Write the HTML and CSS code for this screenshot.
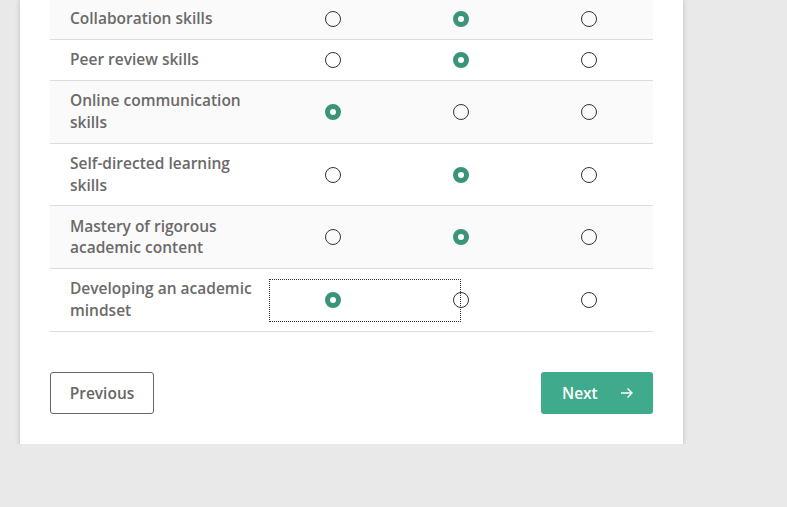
FILE: index.html
```html
<!DOCTYPE html>
<html>
<head>
<meta charset="utf-8">
<link rel="stylesheet" href="styles.css">
</head>
<body>
<div class="card">
  <table class="grid">
    <tr class="odd"><td class="label">Collaboration skills</td><td><span class="radio"></span></td><td><span class="radio on"></span></td><td><span class="radio"></span></td></tr>
    <tr><td class="label">Peer review skills</td><td><span class="radio"></span></td><td><span class="radio on"></span></td><td><span class="radio"></span></td></tr>
    <tr class="odd"><td class="label">Online communication skills</td><td><span class="radio on"></span></td><td><span class="radio"></span></td><td><span class="radio"></span></td></tr>
    <tr><td class="label">Self-directed learning skills</td><td><span class="radio"></span></td><td><span class="radio on"></span></td><td><span class="radio"></span></td></tr>
    <tr class="odd"><td class="label">Mastery of rigorous academic content</td><td><span class="radio"></span></td><td><span class="radio on"></span></td><td><span class="radio"></span></td></tr>
    <tr><td class="label">Developing an academic mindset</td><td class="focus-cell"><span class="focus-ring"></span><span class="radio on"></span></td><td><span class="radio"></span></td><td><span class="radio"></span></td></tr>
  </table>
  <div class="actions">
    <button class="btn prev">Previous</button>
    <button class="btn next">Next <svg class="arrow" width="14" height="12" viewBox="0 0 14 12"><path d="M1 6h11M7.5 1.5L12 6l-4.5 4.5" fill="none" stroke="#fff" stroke-width="1.4"/></svg></button>
  </div>
</div>
</body>
</html>
```
FILE: styles.css
```css
html, body {
  margin: 0;
  padding: 0;
  background: #e9e9e9;
  font-family: "Open Sans", "Liberation Sans", sans-serif;
}
.card {
  width: 663px;
  margin-left: 20px;
  margin-top: -1px;
  background: #fff;
  padding: 0 30px 30px 30px;
  box-sizing: border-box;
  box-shadow: 0 1px 5px rgba(0,0,0,0.2);
}
.grid {
  width: 603px;
  border-collapse: collapse;
  table-layout: fixed;
}
.grid td {
  padding: 9.3px 0;
  border-bottom: 1px solid #dcdcdc;
  text-align: center;
  vertical-align: middle;
  width: 128px;
  height: 21.5px;
  line-height: 0;
}
.grid td.label {
  width: 190px;
  padding-left: 20px;
  padding-right: 9px;
  text-align: left;
  font-size: 15.5px;
  font-weight: 600;
  color: #6a6a6a;
  line-height: 21.5px;
}
.grid tr.odd td { background: #fafafa; }
.radio {
  display: inline-block;
  width: 14px;
  height: 14px;
  border: 1.3px solid #333;
  border-radius: 50%;
  box-sizing: content-box;
  vertical-align: middle;
}
.radio.on {
  width: 6px;
  height: 6px;
  border: 5.5px solid #3a9479;
  background: #fff;
}
.focus-cell { position: relative; }
.focus-ring {
  position: absolute;
  left: 0;
  top: 10px;
  width: 192px;
  height: 43px;
  border: 1px dotted #333;
  box-sizing: border-box;
}
.actions {
  display: flex;
  justify-content: space-between;
  margin-top: 40px;
}
.btn {
  height: 42px;
  border-radius: 3px;
  font-family: "Open Sans", "Liberation Sans", sans-serif;
  font-size: 15.5px;
  font-weight: 600;
  cursor: pointer;
}
.prev {
  width: 104px;
  background: #fff;
  border: 1px solid #666;
  color: #666;
}
.next {
  width: 112px;
  background: #40ab8c;
  border: none;
  color: #fff;
  display: flex;
  align-items: center;
  padding-left: 21px;
  gap: 22px;
}
.arrow { display: block; }
```
